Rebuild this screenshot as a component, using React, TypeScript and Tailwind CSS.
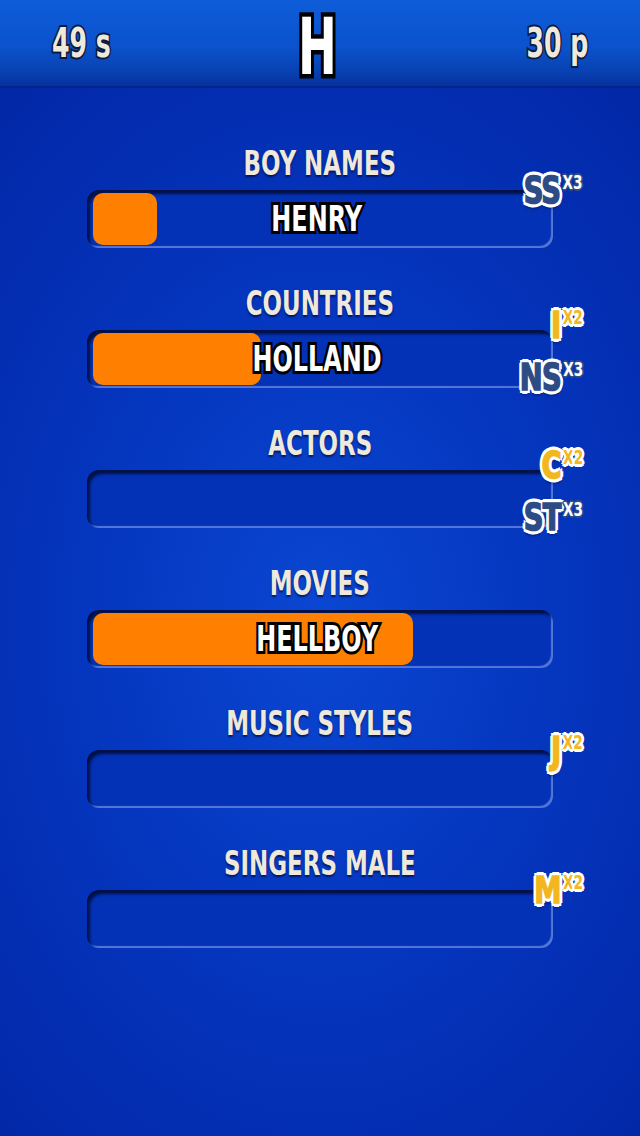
const font = "font-['DejaVu_Sans',sans-serif] [font-stretch:condensed] font-bold";

const outline =
  "[-webkit-text-stroke:6px_#000] [paint-order:stroke_fill] [text-shadow:0_2px_2px_rgba(0,0,0,0.6)]";

// rounded outline rings built from text shadows
const whiteRing =
  "[text-shadow:4px_0_0_#fff,-4px_0_0_#fff,0_4px_0_#fff,0_-4px_0_#fff,3px_3px_0_#fff,-3px_3px_0_#fff,3px_-3px_0_#fff,-3px_-3px_0_#fff,2px_0_0_#fff,-2px_0_0_#fff,0_2px_0_#fff,0_-2px_0_#fff,0_5px_3px_rgba(0,0,40,0.5)]";
const whiteRingSm =
  "[text-shadow:3px_0_0_#fff,-3px_0_0_#fff,0_3px_0_#fff,0_-3px_0_#fff,2px_2px_0_#fff,-2px_2px_0_#fff,2px_-2px_0_#fff,-2px_-2px_0_#fff]";
const navyRingSm =
  "[text-shadow:2px_0_0_#2d4c86,-2px_0_0_#2d4c86,0_2px_0_#2d4c86,0_-2px_0_#2d4c86,1px_1px_0_#2d4c86,-1px_1px_0_#2d4c86,1px_-1px_0_#2d4c86,-1px_-1px_0_#2d4c86]";

type Badge = { letters: string; mult: 2 | 3 };

type Row = {
  title: string;
  fill: number;
  word?: string;
  badges: Badge[];
};

const rows: Row[] = [
  { title: "BOY NAMES", fill: 64, word: "HENRY", badges: [{ letters: "SS", mult: 3 }] },
  {
    title: "COUNTRIES",
    fill: 168,
    word: "HOLLAND",
    badges: [
      { letters: "I", mult: 2 },
      { letters: "NS", mult: 3 },
    ],
  },
  {
    title: "ACTORS",
    fill: 0,
    badges: [
      { letters: "C", mult: 2 },
      { letters: "ST", mult: 3 },
    ],
  },
  { title: "MOVIES", fill: 320, word: "HELLBOY", badges: [] },
  { title: "MUSIC STYLES", fill: 0, badges: [{ letters: "J", mult: 2 }] },
  { title: "SINGERS MALE", fill: 0, badges: [{ letters: "M", mult: 2 }] },
];

const BadgeTag = ({ badge }: { badge: Badge }) => {
  const x2 = badge.mult === 2;
  const main = x2
    ? "text-[#f2b71f] [-webkit-text-stroke:1.5px_#f2b71f]"
    : "text-[#2d4c86] [-webkit-text-stroke:1.5px_#2d4c86]";
  const sup = x2 ? `text-[#f2b71f] ${whiteRingSm}` : `text-white ${navyRingSm}`;
  return (
    <div className="flex items-start leading-none origin-right scale-x-[0.8]">
      <span className={`text-[38px] leading-none tracking-[-1px] ${font} ${main} ${whiteRing}`}>
        {badge.letters}
      </span>
      <span className={`relative text-[19px] leading-none mt-[2px] ml-[3px] ${font} ${sup}`}>
        X{badge.mult}
      </span>
    </div>
  );
};

const CategoryRow = ({ row }: { row: Row }) => {
  const two = row.badges.length === 2;
  return (
    <div className="flex flex-col items-center h-[140px]">
      <div className="h-[40px] flex items-center">
        <span
          className={`inline-block scale-x-[0.75] text-[34px] leading-none text-[#efe9dc] ${font} [text-shadow:0_2px_2px_rgba(0,10,60,0.7)]`}
        >
          {row.title}
        </span>
      </div>
      <div className="relative mt-[7px] w-[466px] h-[58px] rounded-[12px] bg-[#0332b6] shadow-[inset_3px_4px_3px_rgba(0,10,50,0.85),inset_-2px_-2px_1px_rgba(120,150,230,0.7)]">
        {row.fill > 0 && (
          <div
            className="absolute left-[6px] top-[3px] bottom-[3px] rounded-[10px] bg-[#ff8000]"
            style={{ width: row.fill }}
          />
        )}
        {row.word && (
          <div className="absolute inset-0 flex items-center justify-center pr-[6px]">
            <span className={`inline-block scale-x-[0.76] text-[35px] leading-none text-white ${font} ${outline}`}>
              {row.word}
            </span>
          </div>
        )}
        {row.badges.length > 0 && (
          <div
            className={`absolute right-[-30px] flex flex-col items-end ${
              two ? "top-[-24px] gap-[14px]" : "top-[-19px]"
            }`}
          >
            {row.badges.map((b) => (
              <BadgeTag key={b.letters} badge={b} />
            ))}
          </div>
        )}
      </div>
    </div>
  );
};

export default function App() {
  return (
    <div className="w-[640px] h-[1136px] overflow-hidden flex flex-col bg-[radial-gradient(ellipse_75%_60%_at_50%_55%,#0a47d2_0%,#0537c0_45%,#0228a8_100%)]">
      <header className="h-[88px] shrink-0 flex items-center justify-between px-[52px] bg-[linear-gradient(to_bottom,#0e5cd9_0%,#0b52cc_55%,#0840b0_85%,#06309e_100%)] border-b-[2px] border-[#05248a]">
        <span
          className={`inline-block origin-left scale-x-[0.7] text-[40px] leading-none text-[#efe9dc] ${font} [-webkit-text-stroke:4px_#0a1a40] [paint-order:stroke_fill]`}
        >
          49 s
        </span>
        <span
          className={`inline-block scale-x-[0.66] text-[78px] leading-none text-white ${font} [-webkit-text-stroke:9px_#000] [paint-order:stroke_fill] mt-[8px]`}
        >
          H
        </span>
        <span
          className={`inline-block origin-right scale-x-[0.7] text-[40px] leading-none text-[#efe9dc] ${font} [-webkit-text-stroke:4px_#0a1a40] [paint-order:stroke_fill]`}
        >
          30 p
        </span>
      </header>
      <main className="pt-[55px] flex flex-col">
        {rows.map((r) => (
          <CategoryRow key={r.title} row={r} />
        ))}
      </main>
    </div>
  );
}
